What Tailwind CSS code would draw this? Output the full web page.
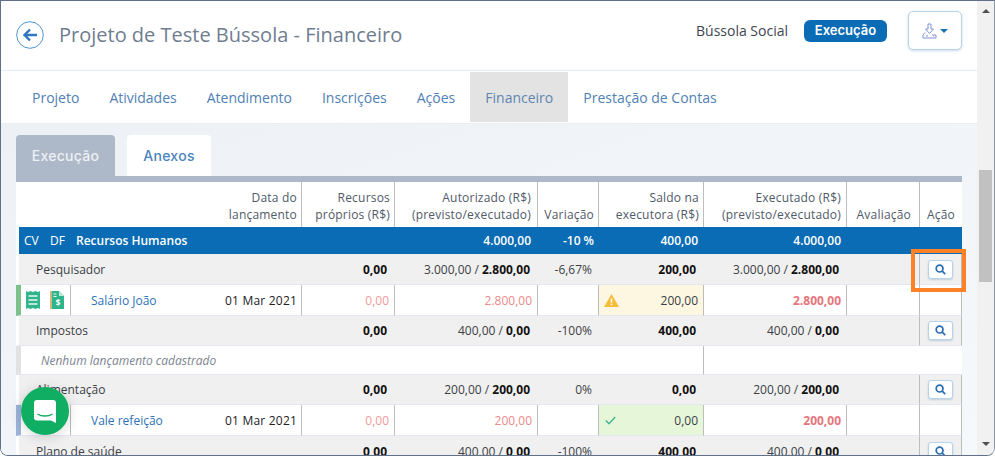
<!DOCTYPE html>
<html lang="pt-BR">
<head>
<meta charset="utf-8">
<title>Projeto de Teste Bússola - Financeiro</title>
<script src="https://cdn.jsdelivr.net/npm/@tailwindcss/browser@4"></script>
</head>
<body class="bg-white overflow-hidden">
<div class="relative flex w-[995px] h-[456px] overflow-hidden border border-t-[#5f7088] border-l-[#5f7088] border-r-[#8a97a8] border-b-[#5f7088] rounded-b-[8px] font-['Open_Sans',sans-serif]">
  <main class="w-[976px] h-full flex flex-col overflow-hidden bg-[#f0f4f8]">
    <header class="h-[70px] shrink-0 bg-white border-b border-[#e1eef4] flex items-center pl-[15px] pr-[15px]">
      <div class="flex items-center self-start mt-[20px]">
        <svg class="w-[28px] h-[28px]" viewBox="0 0 28 28" fill="none">
          <circle cx="14" cy="14" r="13.3" stroke="#4f94d4" stroke-width="1"/>
          <path d="M21 14H9M14 8.5L8.5 14l5.5 5.5" stroke="#2f78c0" stroke-width="2.4"/>
        </svg>
        <h1 class="ml-[15px] text-[20px] leading-[28px] text-[#6f7d90]">Projeto de Teste Bússola - Financeiro</h1>
      </div>
      <div class="ml-auto flex items-center self-start mt-[10px]">
        <span class="text-[14px] text-[#3f4650]">Bússola Social</span>
        <span class="ml-[16px] w-[83px] h-[22px] rounded-[6px] bg-[#0a6cb5] text-white text-[13px] font-semibold flex items-center justify-center font-['Inter',sans-serif]">Execução</span>
        <button class="ml-[21px] w-[54px] h-[39px] rounded-[5px] border border-[#b5d3ea] shadow-[0_1px_3px_rgba(120,150,190,0.35)] bg-white flex items-center justify-center gap-[3px]">
          <svg class="w-[15px] h-[16px]" viewBox="0 0 15 16" fill="none" stroke="#7f93d8" stroke-width="1">
            <path d="M6 1h3v5h2.5L7.5 10.5 3.5 6H6z"/>
            <path d="M3 9.5L1 12v3h13v-3h-4M4 13h2"/>
            <path d="M11 13h1.5" stroke="#e39ab0"/>
          </svg>
          <span class="w-0 h-0 border-x-[4px] border-x-transparent border-t-[4px] border-t-[#1f6fb5]"></span>
        </button>
      </div>
    </header>
    <nav class="h-[53px] shrink-0 bg-white border-b border-[#e9eef3] flex items-start pl-[15px] pt-[1px] text-[14px] text-[#4f81b5]">
      <a class="h-[50px] px-[16px] flex items-center">Projeto</a>
      <a class="h-[50px] pl-[14px] pr-[15px] flex items-center">Atividades</a>
      <a class="h-[50px] pl-[15px] pr-[15px] flex items-center">Atendimento</a>
      <a class="h-[50px] pl-[15px] pr-[15px] flex items-center">Inscrições</a>
      <a class="h-[50px] pl-[15px] pr-[15px] flex items-center">Ações</a>
      <a class="h-[50px] w-[98px] bg-[#e3e3e3] text-[#5f86b0] flex items-center justify-center">Financeiro</a>
      <a class="h-[50px] pl-[15px] flex items-center">Prestação de Contas</a>
    </nav>
    <section class="flex-1 pl-[15px] pt-[10px] bg-gradient-to-br from-[#edf1f6] to-[#f6f9fb] overflow-hidden">
      <div class="flex items-end gap-[12px] h-[42px] font-['Inter',sans-serif] text-[14px] font-medium tracking-[0.3px]">
        <span class="w-[99px] h-[41px] rounded-t-[4px] bg-[#adb8c8] text-[#eef1f5] flex items-center justify-center">Execução</span>
        <span class="w-[84px] h-[41px] rounded-t-[4px] bg-white text-[#4a84bd] flex items-center justify-center">Anexos</span>
      </div>
      <div class="w-[946px] border-t-[6px] border-[#adb8c8]">
        <table class="w-[946px] table-fixed border-separate border-spacing-0 bg-white text-[12px] leading-[17px] text-[#3a3f46]">
          <colgroup>
            <col class="w-[28px]"><col class="w-[26px]"><col class="w-[231px]"><col class="w-[93px]"><col class="w-[143px]"><col class="w-[61px]"><col class="w-[105px]"><col class="w-[143px]"><col class="w-[73px]"><col class="w-[43px]">
          </colgroup>
          <thead>
            <tr class="h-[45px] text-right align-bottom text-[#4f5968] tracking-[0.2px]">
              <th class="font-normal p-0" colspan="2"></th>
              <th class="font-normal pr-[4px] pb-[4px]">Data do<br>lançamento</th>
              <th class="font-normal border-l border-[#bdbdbd] pr-[4px] pb-[4px]">Recursos<br>próprios (R$)</th>
              <th class="font-normal border-l border-[#bdbdbd] pr-[6px] pb-[4px]">Autorizado (R$)<br>(previsto/executado)</th>
              <th class="font-normal border-l border-[#bdbdbd] pr-[4px] pb-[4px]">Variação</th>
              <th class="font-normal border-l border-[#bdbdbd] pr-[4px] pb-[4px]">Saldo na<br>executora (R$)</th>
              <th class="font-normal border-l border-[#bdbdbd] pr-[5px] pb-[4px]">Executado (R$)<br>(previsto/executado)</th>
              <th class="font-normal border-l border-[#bdbdbd] pr-[8px] pb-[4px]">Avaliação</th>
              <th class="font-normal border-l border-[#bdbdbd] pr-[7px] pb-[4px]">Ação</th>
            </tr>
          </thead>
          <tbody>
            <tr class="h-[27px] text-white font-semibold text-right">
              <td class="border-l-[3px] border-white bg-[#0a6cb5] text-left pl-[5px] font-normal">CV</td>
              <td class="bg-[#0a6cb5] text-left pl-[6px] font-normal">DF</td>
              <td class="bg-[#0a6cb5] text-left pl-[6px]">Recursos Humanos</td>
              <td class="bg-[#0a6cb5]"></td>
              <td class="bg-[#0a6cb5] pr-[6px]">4.000,00</td>
              <td class="bg-[#0a6cb5] pr-[4px]">-10 %</td>
              <td class="bg-[#0a6cb5] pr-[5px]">400,00</td>
              <td class="bg-[#0a6cb5] pr-[5px]">4.000,00</td>
              <td class="bg-[#0a6cb5]" colspan="2"></td>
            </tr>
            <tr class="h-[31px] text-right [&>td]:bg-[#f1f0f0] [&>td]:border-b [&>td]:border-b-[#e3e7f0]">
              <td colspan="3" class="border-l-[3px] border-l-white text-left pl-[17px]">Pesquisador</td>
              <td class="pr-[7px] font-bold text-[#111]">0,00</td>
              <td class="pr-[7px]">3.000,00 / <b class="text-[#111]">2.800,00</b></td>
              <td class="pr-[6px]">-6,67%</td>
              <td class="pr-[7px] font-bold text-[#111]">200,00</td>
              <td class="pr-[7px]">3.000,00 / <b class="text-[#111]">2.800,00</b></td>
              <td></td>
              <td class="relative border-l border-r border-l-[#bdbdbd] border-r-[#bdbdbd] text-center">
                <button class="inline-flex w-[25px] h-[19px] items-center justify-center rounded-[3px] bg-white border border-[#b5d3ea] shadow-[0_1px_2px_rgba(120,150,190,0.4)] align-middle">
                  <svg class="w-[11px] h-[11px]" viewBox="0 0 11 11" fill="none" stroke="#2a6db5" stroke-width="1.7"><circle cx="4.6" cy="4.6" r="3.4"/><path d="M7.2 7.2L10.2 10.2"/></svg>
                </button>
                <span class="absolute left-[-9px] top-[-5px] w-[55px] h-[43px] border-[4px] border-[#fd8127]"></span>
              </td>
            </tr>
            <tr class="h-[31px] text-right [&>td]:border-b [&>td]:border-b-[#e3e7f0]">
              <td class="border-l-[5px] border-l-[#7cc08a] pl-[5px]">
                <svg class="w-[14px] h-[18px]" viewBox="0 0 14 18">
                  <path d="M0 0l2 1 2.5-1 2.5 1L9.500 0 12 1l2-1v18l-2-1-2.500 1L7 17l-2.500 1L2 17l-2 1z" fill="#2fb58c"/>
                  <path d="M2.500 5h9M2.500 9h9M2.500 13h9" stroke="#e9f6ef" stroke-width="1.400"/>
                </svg>
              </td>
              <td class="pl-[6px]">
                <svg class="w-[14px] h-[18px]" viewBox="0 0 14 18">
                  <path d="M0 0h9l5 5v13H0z" fill="#2fb58c"/><path d="M0 0h2v18H0z" fill="#d2b77f"/><path d="M9 0l5 5H9z" fill="#bfe8d8"/>
                  <path d="M3.500 3h3M3.500 5.500h3" stroke="#e9f6ef"/>
                  <text x="8" y="15" font-size="8" font-weight="700" fill="#fff" text-anchor="middle">$</text>
                </svg>
              </td>
              <td class="border-l border-l-[#bdbdbd] text-left">
                <div class="flex justify-between pl-[20px] pr-[4px]"><span class="text-[#2d72b8]">Salário João</span><span class="text-[#222] tracking-[0.2px]">01 Mar 2021</span></div>
              </td>
              <td class="border-l border-l-[#bdbdbd] pr-[5px] text-[#f09a9a]">0,00</td>
              <td class="border-l border-l-[#bdbdbd] pr-[5px] text-[#ec8a8a]">2.800,00</td>
              <td class="border-l border-l-[#bdbdbd]"></td>
              <td class="border-l border-l-[#bdbdbd] bg-[#fdf6e0] pr-[5px]">
                <div class="flex items-center justify-between pl-[5px]">
                  <svg class="w-[15px] h-[13px]" viewBox="0 0 15 13"><path d="M7.500 0L15 13H0z" fill="#f4bd3a"/><path d="M7.500 4.500v4M7.500 9.700v1.500" stroke="#fff" stroke-width="1.500"/></svg>
                  <span>200,00</span>
                </div>
              </td>
              <td class="border-l border-l-[#bdbdbd] pr-[5px] font-bold text-[#e8747c]">2.800,00</td>
              <td class="border-l border-l-[#bdbdbd]"></td>
              <td class="border-l border-r border-l-[#bdbdbd] border-r-[#bdbdbd]"></td>
            </tr>
            <tr class="h-[30px] text-right [&>td]:bg-[#f1f0f0] [&>td]:border-b [&>td]:border-b-[#e3e7f0]">
              <td colspan="3" class="border-l-[3px] border-l-white text-left pl-[17px]">Impostos</td>
              <td class="pr-[7px] font-bold text-[#111]">0,00</td>
              <td class="pr-[7px]">400,00 / <b class="text-[#111]">0,00</b></td>
              <td class="pr-[6px]">-100%</td>
              <td class="pr-[7px] font-bold text-[#111]">400,00</td>
              <td class="pr-[7px]">400,00 / <b class="text-[#111]">0,00</b></td>
              <td></td>
              <td class="border-l border-r border-l-[#bdbdbd] border-r-[#bdbdbd] text-center">
                <button class="inline-flex w-[25px] h-[19px] items-center justify-center rounded-[3px] bg-white border border-[#b5d3ea] shadow-[0_1px_2px_rgba(120,150,190,0.4)] align-middle">
                  <svg class="w-[11px] h-[11px]" viewBox="0 0 11 11" fill="none" stroke="#2a6db5" stroke-width="1.7"><circle cx="4.6" cy="4.6" r="3.4"/><path d="M7.2 7.2L10.2 10.2"/></svg>
                </button>
              </td>
            </tr>
            <tr class="h-[29px] [&>td]:border-b [&>td]:border-b-[#e3e7f0]">
              <td colspan="7" class="border-l-[5px] border-l-[#e2e2e2] pl-[20px] italic text-[#7d8590]">Nenhum lançamento cadastrado</td>
              <td colspan="3" class="border-l border-l-[#bdbdbd]"></td>
            </tr>
            <tr class="h-[30px] text-right [&>td]:bg-[#f1f0f0] [&>td]:border-b [&>td]:border-b-[#e3e7f0]">
              <td colspan="3" class="border-l-[3px] border-l-white text-left pl-[17px]">Alimentação</td>
              <td class="pr-[7px] font-bold text-[#111]">0,00</td>
              <td class="pr-[7px]">200,00 / <b class="text-[#111]">200,00</b></td>
              <td class="pr-[6px]">0%</td>
              <td class="pr-[7px] font-bold text-[#111]">0,00</td>
              <td class="pr-[7px]">200,00 / <b class="text-[#111]">200,00</b></td>
              <td></td>
              <td class="border-l border-r border-l-[#bdbdbd] border-r-[#bdbdbd] text-center">
                <button class="inline-flex w-[25px] h-[19px] items-center justify-center rounded-[3px] bg-white border border-[#b5d3ea] shadow-[0_1px_2px_rgba(120,150,190,0.4)] align-middle">
                  <svg class="w-[11px] h-[11px]" viewBox="0 0 11 11" fill="none" stroke="#2a6db5" stroke-width="1.7"><circle cx="4.6" cy="4.6" r="3.4"/><path d="M7.2 7.2L10.2 10.2"/></svg>
                </button>
              </td>
            </tr>
            <tr class="h-[31px] text-right [&>td]:border-b [&>td]:border-b-[#e3e7f0]">
              <td class="border-l-[5px] border-l-[#9db4d8]"></td>
              <td></td>
              <td class="border-l border-l-[#bdbdbd] text-left">
                <div class="flex justify-between pl-[20px] pr-[4px]"><span class="text-[#2d72b8]">Vale refeição</span><span class="text-[#222] tracking-[0.2px]">01 Mar 2021</span></div>
              </td>
              <td class="border-l border-l-[#bdbdbd] pr-[5px] text-[#f09a9a]">0,00</td>
              <td class="border-l border-l-[#bdbdbd] pr-[5px] text-[#ec8a8a]">200,00</td>
              <td class="border-l border-l-[#bdbdbd]"></td>
              <td class="border-l border-l-[#bdbdbd] bg-[#e6f6d9] pr-[5px]">
                <div class="flex items-center justify-between pl-[6px]">
                  <svg class="w-[11px] h-[9px]" viewBox="0 0 11 9" fill="none"><path d="M.8 4.500L4 7.700 10.200 1" stroke="#3bb58e" stroke-width="1.300"/></svg>
                  <span>0,00</span>
                </div>
              </td>
              <td class="border-l border-l-[#bdbdbd] pr-[5px] font-bold text-[#e8747c]">200,00</td>
              <td class="border-l border-l-[#bdbdbd]"></td>
              <td class="border-l border-r border-l-[#bdbdbd] border-r-[#bdbdbd]"></td>
            </tr>
            <tr class="h-[30px] text-right [&>td]:bg-[#f1f0f0]">
              <td colspan="3" class="border-l-[3px] border-l-white text-left pl-[17px]">Plano de saúde</td>
              <td class="pr-[7px] font-bold text-[#111]">0,00</td>
              <td class="pr-[7px]">400,00 / <b class="text-[#111]">0,00</b></td>
              <td class="pr-[6px]">-100%</td>
              <td class="pr-[7px] font-bold text-[#111]">400,00</td>
              <td class="pr-[7px]">400,00 / <b class="text-[#111]">0,00</b></td>
              <td></td>
              <td class="border-l border-r border-l-[#bdbdbd] border-r-[#bdbdbd] text-center">
                <button class="inline-flex w-[25px] h-[19px] items-center justify-center rounded-[3px] bg-white border border-[#b5d3ea] shadow-[0_1px_2px_rgba(120,150,190,0.4)] align-middle">
                  <svg class="w-[11px] h-[11px]" viewBox="0 0 11 11" fill="none" stroke="#2a6db5" stroke-width="1.7"><circle cx="4.6" cy="4.6" r="3.4"/><path d="M7.2 7.2L10.2 10.2"/></svg>
                </button>
              </td>
            </tr>
          </tbody>
        </table>
      </div>
    </section>
  </main>
  <aside class="w-[17px] h-full shrink-0 bg-[#f1f1f1] flex flex-col items-center">
    <span class="mt-[8px] w-0 h-0 border-x-[4px] border-x-transparent border-b-[4px] border-b-[#505050]"></span>
    <span class="mt-[157px] w-[13px] h-[112px] bg-[#c1c1c1]"></span>
    <span class="mt-[160px] w-0 h-0 border-x-[4px] border-x-transparent border-t-[4px] border-t-[#505050]"></span>
  </aside>
  <button class="absolute left-[20px] top-[386px] w-[48px] h-[48px] rounded-full bg-[#0fae62] shadow-[0_2px_14px_rgba(0,0,0,0.16)] flex items-center justify-center">
    <svg class="w-[22px] h-[23px]" viewBox="0 0 22 23">
      <path d="M3 0h16a3 3 0 0 1 3 3v20l-5-2.500H3a3 3 0 0 1-3-3V3a3 3 0 0 1 3-3z" fill="#fff"/>
      <path d="M3.500 14c4 2.800 11 2.800 15 0" fill="none" stroke="#0fae62" stroke-width="1.500"/>
    </svg>
  </button>
</div>
</body>
</html>
